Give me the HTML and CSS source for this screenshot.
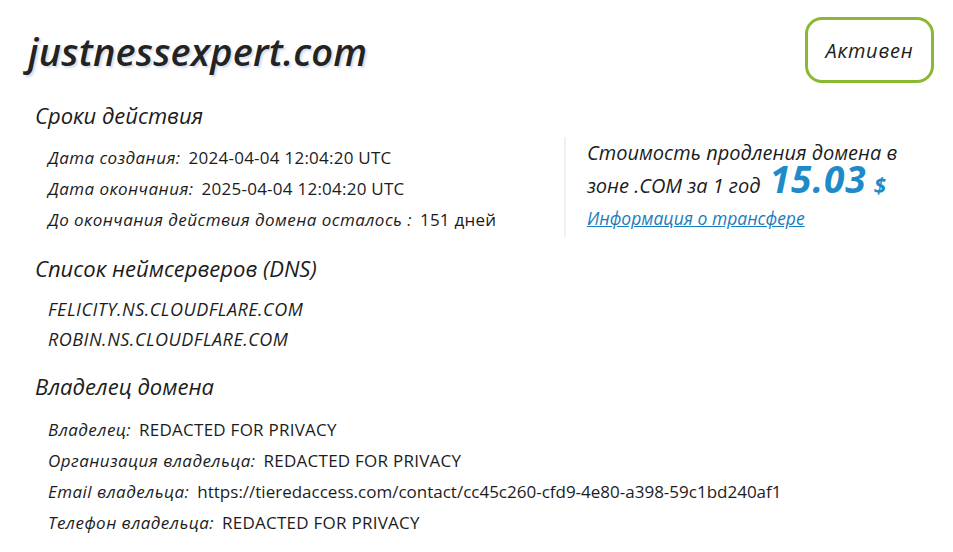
FILE: index.html
```html
<!DOCTYPE html>
<html lang="ru">
<head>
<meta charset="utf-8">
<link rel="stylesheet" href="styles.css">
</head>
<body>
<div class="page">
  <header class="top">
    <h1 class="domain">justnessexpert.com</h1>
    <div class="badge">Активен</div>
  </header>

  <section class="sec sec-first">
    <div class="sec-main">
      <h2 class="sec-title">Сроки действия</h2>
      <div class="rows">
        <div class="row"><span class="lbl">Дата создания:</span><span class="val">2024-04-04 12:04:20 UTC</span></div>
        <div class="row"><span class="lbl">Дата окончания:</span><span class="val">2025-04-04 12:04:20 UTC</span></div>
        <div class="row"><span class="lbl">До окончания действия домена осталось :</span><span class="val">151 дней</span></div>
      </div>
    </div>
    <aside class="price">
      <div class="price-line">Стоимость продления домена в</div>
      <div class="price-line price-line2">зоне .COM за 1 год <span class="amount">15.03</span><span class="cur">$</span></div>
      <a class="transfer" href="#">Информация о трансфере</a>
    </aside>
  </section>

  <section class="sec">
    <h2 class="sec-title">Список неймсерверов (DNS)</h2>
    <div class="rows rows-ns">
      <div class="row ns">FELICITY.NS.CLOUDFLARE.COM</div>
      <div class="row ns">ROBIN.NS.CLOUDFLARE.COM</div>
    </div>
  </section>

  <section class="sec sec-owner">
    <h2 class="sec-title">Владелец домена</h2>
    <div class="rows rows-owner">
      <div class="row"><span class="lbl">Владелец:</span><span class="val">REDACTED FOR PRIVACY</span></div>
      <div class="row"><span class="lbl">Организация владельца:</span><span class="val">REDACTED FOR PRIVACY</span></div>
      <div class="row"><span class="lbl">Email владельца:</span><span class="val val-url">https://tieredaccess.com/contact/cc45c260-cfd9-4e80-a398-59c1bd240af1</span></div>
      <div class="row"><span class="lbl">Телефон владельца:</span><span class="val">REDACTED FOR PRIVACY</span></div>
    </div>
  </section>
</div>
</body>
</html>
```

FILE: styles.css
```css
html, body {
  margin: 0;
  padding: 0;
  background: #ffffff;
}
body {
  font-family: "Open Sans", "Noto Sans", sans-serif;
  color: #1c1c1c;
}
.page {
  width: 953px;
  height: 552px;
  overflow: hidden;
  box-sizing: border-box;
  padding: 17px 19px 0 35px;
}
.top {
  display: flex;
  align-items: center;
  justify-content: space-between;
  height: 66px;
}
.domain {
  margin: 2px 0 0 -7px;
  font-size: 38px;
  font-style: italic;
  font-weight: 600;
  letter-spacing: 0.2px;
  color: #232323;
  text-shadow: 2px 2px 2px rgba(140, 160, 190, 0.35);
  line-height: 48px;
}
.badge {
  box-sizing: border-box;
  width: 129px;
  height: 66px;
  border: 3px solid #8bb832;
  border-radius: 17px;
  display: flex;
  align-items: center;
  justify-content: center;
  font-style: italic;
  font-size: 20px;
  font-weight: 500;
  letter-spacing: 0.8px;
  color: #1c1c1c;
}
.sec {
  margin-top: 16px;
}
.sec-first {
  margin-top: 17px;
  display: flex;
}
.sec-owner {
  margin-top: 17px;
}
.sec-main {
  width: 529px;
}
.sec-title {
  margin: 0;
  font-size: 22px;
  font-weight: 500;
  font-style: italic;
  line-height: 30px;
  color: #1c1c1c;
}
.rows {
  margin-top: 12px;
  padding-left: 13px;
}
.rows-ns {
  margin-top: 11px;
}
.rows-owner {
  margin-top: 13px;
}
.rows-ns .row {
  line-height: 30px;
}
.row {
  line-height: 31px;
  font-size: 17px;
  white-space: nowrap;
}
.lbl {
  font-style: italic;
  font-weight: 500;
  letter-spacing: 0.45px;
  margin-right: 8px;
}
.val {
  font-style: normal;
  font-weight: 400;
  letter-spacing: 0.25px;
}
.val-url {
  letter-spacing: 0;
}
.ns {
  font-style: italic;
  font-weight: 500;
  font-size: 18px;
  letter-spacing: 0.5px;
}
.price {
  margin-top: 37px;
  height: 100px;
  border-left: 2px solid #f0f0f0;
  padding-left: 21px;
  font-style: italic;
  font-weight: 500;
  font-size: 20px;
  color: #1c1c1c;
}
.price-line {
  line-height: 32px;
}
.price-line2 {
  line-height: 34px;
}
.amount {
  line-height: 0;
  font-size: 37px;
  font-weight: 700;
  color: #1e8ac8;
  letter-spacing: 1px;
  margin-left: 4px;
}
.cur {
  line-height: 0;
  font-size: 22px;
  font-weight: 700;
  color: #1e8ac8;
  margin-left: 7px;
}
.transfer {
  display: block;
  line-height: 30px;
  font-size: 17.5px;
  color: #1a7cbd;
  text-decoration: underline;
}
```
